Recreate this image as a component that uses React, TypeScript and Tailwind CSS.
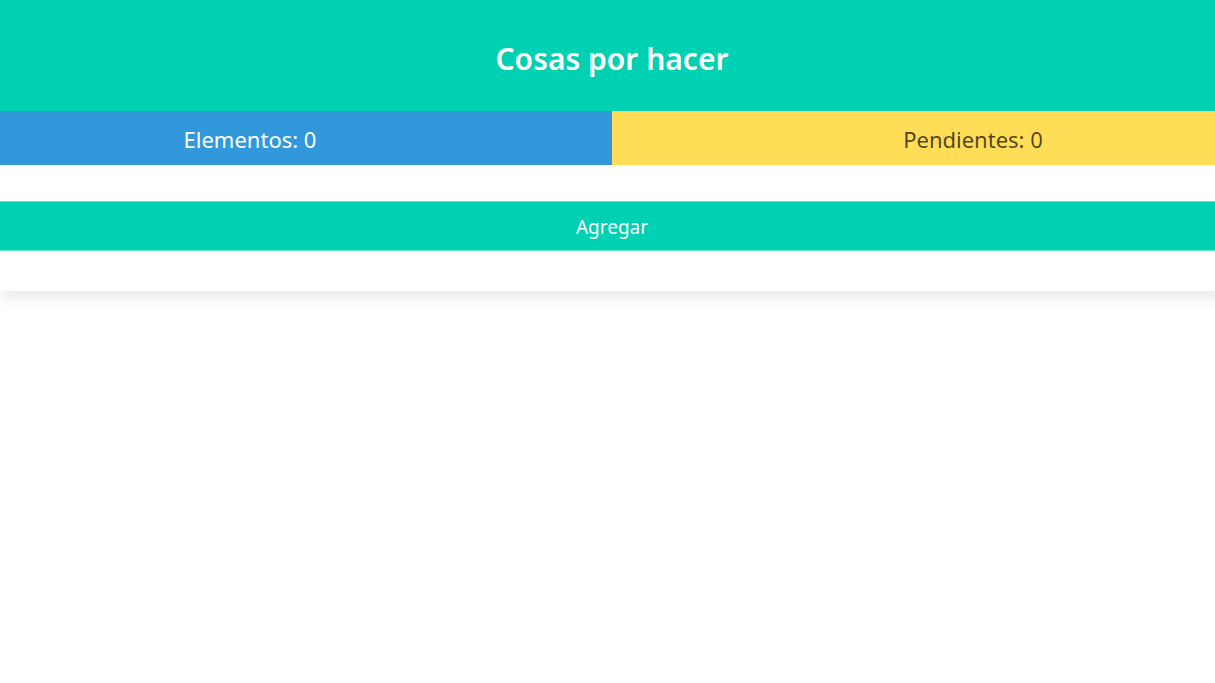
export default function App() {
  return (
    <div className="min-h-[683px] overflow-hidden bg-white" style={{ fontFamily: '"Noto Sans", "Open Sans", sans-serif' }}>
      <div className="w-[1224px] bg-white shadow-[0_8px_16px_-2px_rgba(10,10,10,0.1)]">
        <header className="flex h-[111px] items-center justify-center bg-[#00d1b2] pt-[6px]">
          <h1 className="text-[30px] font-semibold text-white">Cosas por hacer</h1>
        </header>
        <div className="flex h-[54px]">
          <div className="flex w-1/2 items-center justify-center bg-[#3298dc] pt-[2px] pr-[112px] text-[22px] text-white">
            Elementos: 0
          </div>
          <div className="flex w-1/2 items-center justify-center bg-[#ffdd57] pt-[2px] pl-[110px] text-[22px] text-black/70">
            Pendientes: 0
          </div>
        </div>
        <input className="block h-[36px] w-full bg-white outline-none" />
        <button className="block h-[50px] w-full border-y border-[#5ee6d2] bg-[#00d1b2] pt-[2px] text-[19px] text-white">
          Agregar
        </button>
        <div className="h-[40px]" />
      </div>
    </div>
  )
}
